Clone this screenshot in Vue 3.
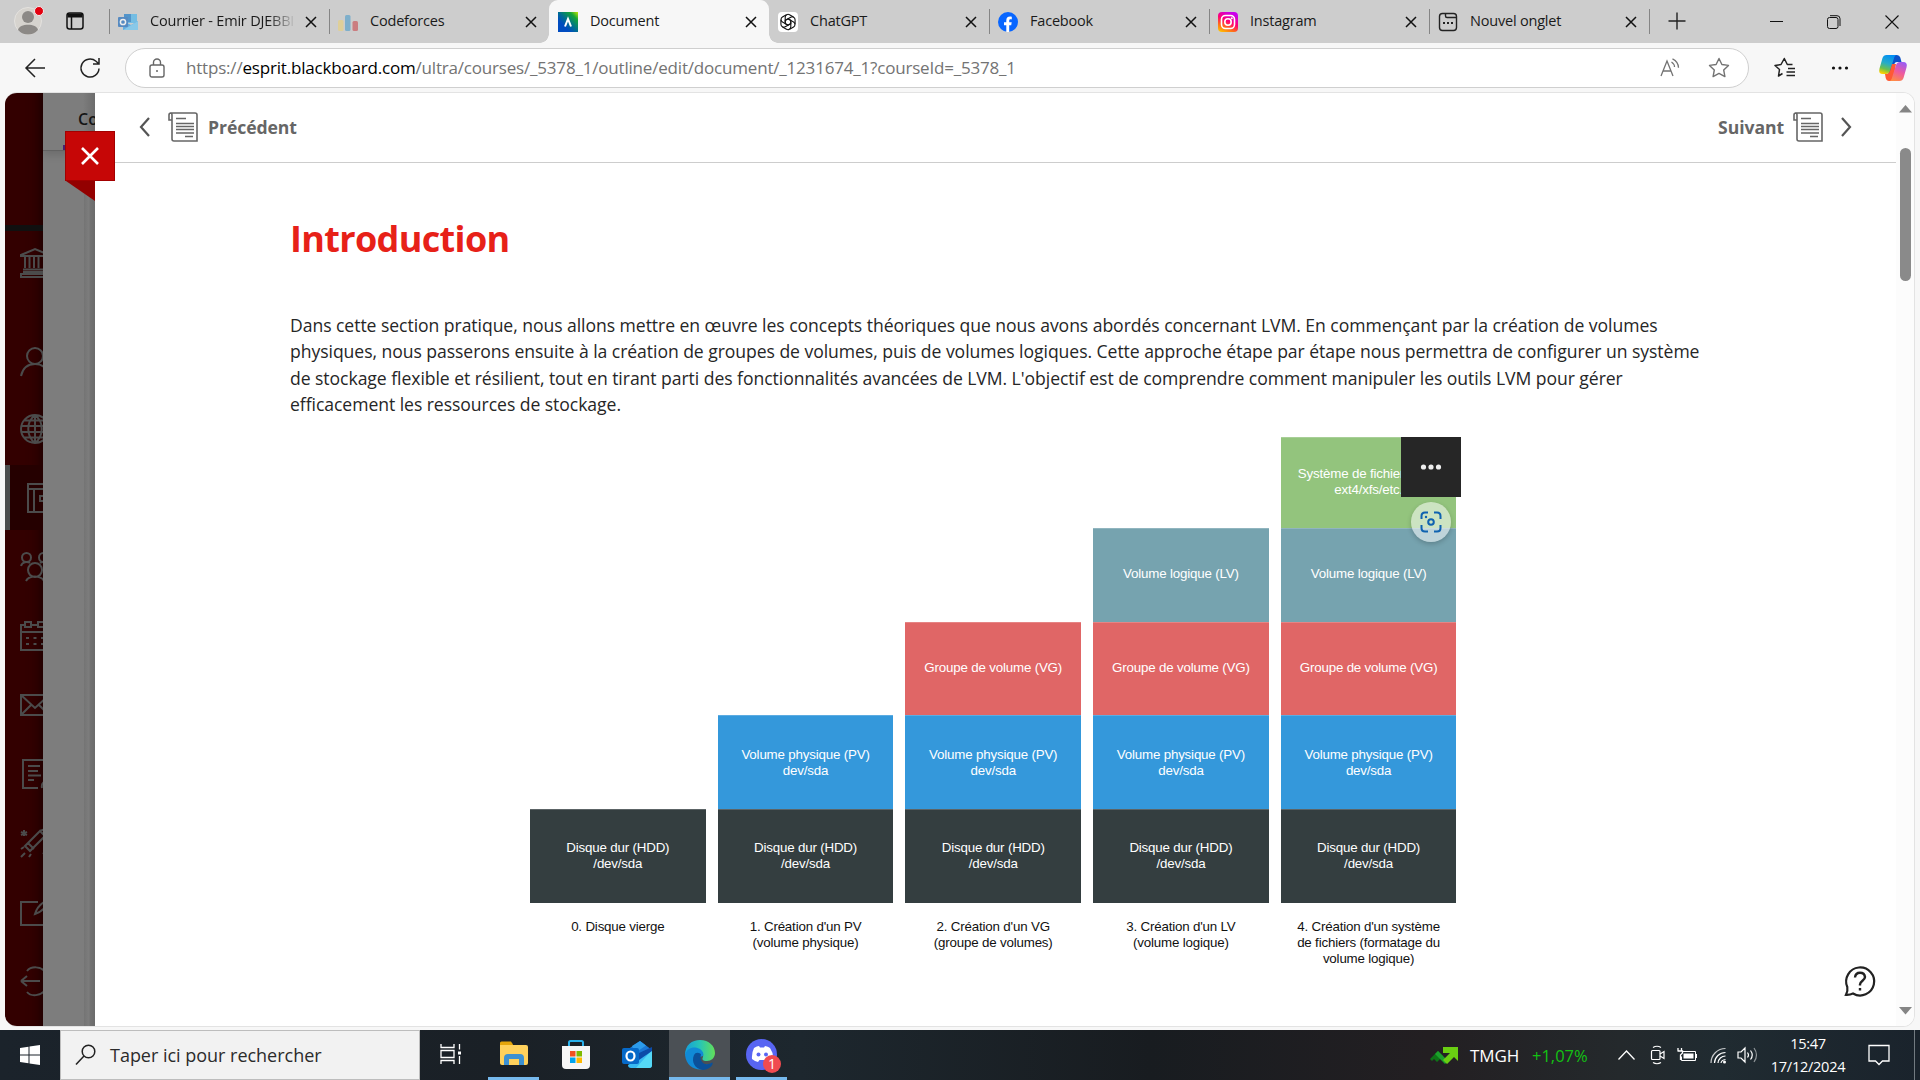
<script setup>
const tabs = [
  { icon: 'outlook', title: 'Courrier - Emir DJEBBI', fade: true },
  { icon: 'codeforces', title: 'Codeforces' },
  { icon: 'document', title: 'Document', active: true },
  { icon: 'chatgpt', title: 'ChatGPT' },
  { icon: 'facebook', title: 'Facebook' },
  { icon: 'instagram', title: 'Instagram' },
  { icon: 'blank', title: 'Nouvel onglet' },
]

const sideIcons = [
  { name: 'bank', d: 'M1 7 15 1l14 6v1H1zM5 9v11M9.500 9v11M14 9v11M18.500 9v11M25 9v11M3 21.500h24M3 24h24M1 26h28v3H1z' },
  { name: 'person', d: 'M23 9a8 8 0 1 1-16 0a8 8 0 1 1 16 0M1 29c2-9 8-12 14-12s12 3 14 12' },
  { name: 'globe', d: 'M29 15a14 14 0 1 1-28 0a14 14 0 1 1 28 0M15 1v28M1.500 12h27M1.500 18h27M4 6.500h22M4 23.500h22M15 1c-9 7-9 21 0 28M15 1c9 7 9 21 0 28' },
  { name: 'courses', active: true, d: 'M8 1h25v28H8zM8 6h25M14 6v23M33 13H20v5h13' },
  { name: 'groups', d: 'M11 5.500a4.500 4.500 0 1 1-9 0a4.500 4.500 0 1 1 9 0M28 5.500a4.500 4.500 0 1 1-9 0a4.500 4.500 0 1 1 9 0M22 18a7 7 0 1 1-14 0a7 7 0 1 1 14 0M1 14c1-4 6-5 9-3M29 14c-1-4-6-5-9-3M6 29c3-6 15-6 18 0' },
  { name: 'calendar', d: 'M5 4H1v25h28V4h-4M11 4h7M1 11h28M5 1h6v5H5zM18 1h6v5h-6zM6 17h3M13.500 17h3M21 17h3M6 23h3M13.500 23h3M21 23h3' },
  { name: 'messages', d: 'M1 5h28v20H1zM1 5l14 13L29 5M1 25l10-10M29 25 19 15' },
  { name: 'grades', d: 'M18 29H3V1h26v20M8 7h12M8 12h10M8 16.500h13M8 21h6M22 29c-1-5 2-7 7-7' },
  { name: 'tools', d: 'M5 18 20 3l5 5L10 23zM8 15l6 6M12 21 27 6M20 3l5-2M4 2v6M1 4l6 3M7 4 1 7M4 19l-3 2M5 25l-4 4M11 26l-2 3M23 26l3-3' },
  { name: 'edit', d: 'M18 5H1v23h25V16M28 3c-7 3-11 7-13 14c6-2 11-6 14-14' },
  { name: 'logout', d: 'M7 5c4-5 14-5 18 1M7 26c4 5 14 4 18-2M1 15h19M1 15l6-5M1 15l6 5' },
]

const HDD = { kind: 'hdd', lines: ['Disque dur (HDD)', '/dev/sda'] }
const PV = { kind: 'pv', lines: ['Volume physique (PV)', 'dev/sda'] }
const VG = { kind: 'vg', lines: ['Groupe de volume (VG)'] }
const LV = { kind: 'lv', lines: ['Volume logique (LV)'] }
const FS = { kind: 'fs', lines: ['Système de fichiers (FS)', 'ext4/xfs/etc.'] }
const columns = [
  { blocks: [HDD], caption: ['0. Disque vierge'] },
  { blocks: [PV, HDD], caption: ["1. Création d'un PV", '(volume physique)'] },
  { blocks: [VG, PV, HDD], caption: ["2. Création d'un VG", '(groupe de volumes)'] },
  { blocks: [LV, VG, PV, HDD], caption: ["3. Création d'un LV", '(volume logique)'] },
  { blocks: [FS, LV, VG, PV, HDD], caption: ["4. Création d'un système", 'de fichiers (formatage du', 'volume logique)'] },
]
</script>

<template>
  <div class="screen">
    <header class="tabstrip">
      <div class="profile">
        <svg width="32" height="32" viewBox="0 0 32 32"><circle cx="16" cy="16" r="13.500" fill="#d6d3ce" stroke="#e4e2df" /><circle cx="16" cy="12" r="6" fill="#8c8986" /><path d="M6 25c1-7 19-7 20 0c-5 6-15 6-20 0z" fill="#8c8986" /><circle cx="27" cy="6" r="4.500" fill="#e3000f" stroke="#eee" /></svg>
      </div>
      <div class="workspace">
        <svg width="18" height="18" viewBox="0 0 18 18" fill="none" stroke="#111" stroke-width="1.500"><rect x="1" y="1" width="16" height="16" rx="2.500" /><path d="M1.500 3.500h15" stroke-width="4" /><path d="M5.500 5v12" /></svg>
      </div>
      <div v-for="tab in tabs" :key="tab.icon" class="tab" :class="[{ active: tab.active }, tab.icon]">
        <svg class="favicon" width="20" height="20" viewBox="0 0 20 20">
          <g v-if="tab.icon === 'outlook'" opacity=".65"><path d="M6 2h13v9H6z" fill="#45b5f0" /><path d="M6 2h7v8H6z" fill="#1177c9" /><path d="M5 9l8 4 7-4v9H5z" fill="#2b9bea" /><path d="M5 18l15-9v9z" fill="#65c6f7" /><rect y="5" width="10" height="10" rx="1" fill="#1767bb" /><circle cx="5" cy="10" r="2.600" fill="none" stroke="#fff" stroke-width="1.500" /></g>
          <g v-else-if="tab.icon === 'codeforces'"><rect y="8" width="5.500" height="11" rx="1.500" fill="#dfcf98" /><rect x="7" y="3" width="5.500" height="16" rx="1.500" fill="#7eafcb" /><rect x="14.500" y="9" width="5.500" height="10" rx="1.500" fill="#cb7d80" /></g>
          <g v-else-if="tab.icon === 'document'"><defs><linearGradient id="doc" x1="1" y1="0" x2=".3" y2=".7"><stop stop-color="#c5e600" /><stop offset=".3" stop-color="#13a538" /><stop offset=".7" stop-color="#006e91" /><stop offset="1" stop-color="#004cc0" /></linearGradient></defs><path d="M0 0h20v20H0z" fill="url(#doc)" /><path d="M7 14.500 10 7l3 7.500" fill="none" stroke="#fff" stroke-width="2" /></g>
          <g v-else-if="tab.icon === 'chatgpt'"><rect width="20" height="20" rx="4" fill="#fff" /><g fill="none" stroke="#111" stroke-width="1.100"><path v-for="a in 6" :key="a" d="M7.200 8.400V5.200a2.900 2.900 0 0 1 4.300-2.500l4 2.300M7.200 8.400v3.200l2.800 1.600" :transform="`rotate(${a * 60} 10 10)`" /></g></g>
          <g v-else-if="tab.icon === 'facebook'"><circle cx="10" cy="10" r="10" fill="#0866ff" /><path d="M8.300 20v-6.700H6v-3h2.300V8.600c0-3.300 1.700-4.500 5.500-3.900v2.700c-2-.2-2.600.2-2.600 1.500v1.400h2.500l-.5 3h-2V20z" fill="#fff" /></g>
          <g v-else-if="tab.icon === 'instagram'"><defs><linearGradient id="ig" x1=".1" y1="1" x2=".6" y2="0"><stop stop-color="#ffc800" /><stop offset=".3" stop-color="#ff6b1a" /><stop offset=".6" stop-color="#ff0075" /><stop offset="1" stop-color="#c800ee" /></linearGradient></defs><rect width="20" height="20" rx="4" fill="url(#ig)" /><g fill="none" stroke="#fff" stroke-width="1.600"><rect x="3.500" y="3.500" width="13" height="13" rx="4" /><circle cx="10" cy="10" r="3.200" /></g><circle cx="13.800" cy="6.300" r="1" fill="#fff" /></g>
          <g v-else fill="none" stroke="#222" stroke-width="1.400"><rect x="1.500" y="1.500" width="17" height="17" rx="3" /><path d="M7.500 2v2q0 1.500 1.500 1.500h9" /><path d="M5 11h2M9 11h2M13 11h2" stroke-width="2" /></g>
        </svg>
        <span class="tabtitle" :class="{ fade: tab.fade }">{{ tab.title }}</span>
        <svg class="tabclose" width="12" height="12" viewBox="0 0 12 12"><path d="M1 1l10 10M11 1 1 11" stroke="#111" stroke-width="1.500" /></svg>
      </div>
      <div class="newtab"><svg width="18" height="18" viewBox="0 0 18 18"><path d="M9 .5v17M.5 9h17" stroke="#222" stroke-width="1.400" /></svg></div>
      <div class="winbtns">
        <svg width="13" height="13" viewBox="0 0 13 13"><path d="M0 6.500h13" stroke="#111" /></svg>
        <svg width="14" height="14" viewBox="0 0 14 14" fill="none" stroke="#111"><rect x=".5" y="2.500" width="10.500" height="11" rx="2" /><path d="M3 .7h7q3 0 3 3V11" /></svg>
        <svg width="14" height="14" viewBox="0 0 14 14"><path d="M.5.5l13 13M13.500.5l-13 13" stroke="#111" stroke-width="1.100" /></svg>
      </div>
    </header>

    <div class="toolbar">
      <svg class="back" width="20" height="20" viewBox="0 0 20 20" fill="none" stroke="#222" stroke-width="1.500"><path d="M20 10H1M10 1 1 10l9 9" /></svg>
      <svg class="reload" width="22" height="22" viewBox="0 0 22 22" fill="none" stroke="#222" stroke-width="1.500"><path d="M20 11.500a9 9 0 1 1-3-7.200L20 7M20 1v6h-6" /></svg>
      <div class="address">
        <svg class="lock" width="16" height="20" viewBox="0 0 16 20" fill="none" stroke="#666" stroke-width="1.400"><rect x="1" y="7" width="14" height="12" rx="2" /><path d="M4.500 7V4.500a3.500 3.500 0 0 1 7 0V7" /><circle cx="8" cy="13" r="1" fill="#666" stroke="none" /></svg>
        <span class="url">https://<b>esprit.blackboard.com</b>/ultra/courses/_5378_1/outline/edit/document/_1231674_1?courseId=_5378_1</span>
        <svg class="read" width="20" height="20" viewBox="0 0 20 20" fill="none" stroke="#737373" stroke-width="1.300"><path d="M1 18 7 3l6 15M3 13h8M11.500 4q3 2 3 5M12.500.8q6 3 6 9" /></svg>
        <svg width="22" height="22" viewBox="0 0 22 22" fill="none" stroke="#737373" stroke-width="1.400"><path d="M11 1.500l2.900 6 6.600.9-4.800 4.600 1.200 6.600-5.900-3.200-5.900 3.200L6.300 13 1.500 8.400l6.600-.9z" stroke-linejoin="round" /></svg>
      </div>
      <svg class="fav" width="22" height="22" viewBox="0 0 22 22" fill="none" stroke="#222" stroke-width="1.500"><path d="M8.500 16.500 4.500 19l1-6.500L1 8.500l6-1 3.300-6 3 6h5.200M14 11.500h7M12.500 15h8.500M12.500 18.500h8.500" stroke-linejoin="round" /></svg>
      <svg class="more" width="18" height="6" viewBox="0 0 18 6" fill="#111"><circle cx="2.500" cy="3" r="1.600" /><circle cx="9" cy="3" r="1.600" /><circle cx="15.500" cy="3" r="1.600" /></svg>
      <svg class="copilot" width="28" height="28" viewBox="0 0 28 28">
        <defs><linearGradient id="cpa" x1=".6" y1="0" x2=".3" y2="1"><stop stop-color="#008ef5" /><stop offset=".45" stop-color="#26acc8" /><stop offset=".75" stop-color="#6bc04d" /><stop offset="1" stop-color="#ffd000" /></linearGradient><linearGradient id="cpb" x1=".7" y1="0" x2=".3" y2="1"><stop stop-color="#9b5cf2" /><stop offset=".5" stop-color="#ee5aa0" /><stop offset="1" stop-color="#ff8c45" /></linearGradient></defs>
        <path d="M14 1h4q2.500 0 3.300 2.600L22.500 8H18q-2 0-2.700 2l-3 10h-3z" fill="#0b51c9" />
        <path d="M7.500 1H18q-2 0-2.700 2.200L11 17q-1 3-4 3H4q-5 0-3.500-5.500L3.500 4q1-3 4-3z" fill="url(#cpa)" />
        <path d="M14 27h-4q-2.500 0-3.300-3L6 20h2q2 0 3-3l2-7h4z" fill="#ff5935" />
        <path d="M20.500 27H10q2 0 2.700-2.200L17 11q1-3 4-3h3q5 0 3.500 5.500l-3 10.500q-1 3-4 3z" fill="url(#cpb)" />
      </svg>
    </div>

    <main class="viewport">
      <nav class="sidebar">
        <div class="logo"></div>
        <div v-for="item in sideIcons" :key="item.name" class="sideitem" :class="[item.name, { current: item.active }]">
          <svg width="36" height="30" viewBox="0 0 36 30" fill="none" stroke="#4b4b4b" stroke-width="2"><path :d="item.d" /></svg>
        </div>
      </nav>
      <div class="under">
        <div class="underhead">Co</div>
        <div class="marker"></div>
      </div>

      <section class="panel">
        <div class="close"><svg width="18" height="18" viewBox="0 0 18 18"><path d="M1 1l16 16M17 1 1 17" stroke="#fff" stroke-width="2.600" /></svg></div>
        <div class="fold"></div>
        <div class="pager">
          <div class="page">
            <svg width="11" height="20" viewBox="0 0 11 20" fill="none" stroke="#555" stroke-width="2.200"><path d="M10 1 2 10l8 9" /></svg>
            <svg class="docicon" width="30" height="30" viewBox="0 0 30 30" fill="none" stroke="#666" stroke-width="1.600"><path d="M4 8v19q0 2 2 2h23V3q0-2-2-2H3Q1 1 1 3v5h3V3q0-2-1.500-2M8 6.500h10M8 11.500h18M8 14.500h18M8 17.500h18M8 21h18M17 24.500h8" /></svg>
            <span>Précédent</span>
          </div>
          <div class="page">
            <span>Suivant</span>
            <svg class="docicon" width="30" height="30" viewBox="0 0 30 30" fill="none" stroke="#666" stroke-width="1.600"><path d="M4 8v19q0 2 2 2h23V3q0-2-2-2H3Q1 1 1 3v5h3V3q0-2-1.500-2M8 6.500h10M8 11.500h18M8 14.500h18M8 17.500h18M8 21h18M17 24.500h8" /></svg>
            <svg width="11" height="20" viewBox="0 0 11 20" fill="none" stroke="#555" stroke-width="2.200"><path d="M1 1l8 9-8 9" /></svg>
          </div>
        </div>
        <article>
          <h1>Introduction</h1>
          <p>
            Dans cette section pratique, nous allons mettre en œuvre les concepts théoriques que nous avons abordés concernant LVM. En commençant par la création de volumes<br />
            physiques, nous passerons ensuite à la création de groupes de volumes, puis de volumes logiques. Cette approche étape par étape nous permettra de configurer un système<br />
            de stockage flexible et résilient, tout en tirant parti des fonctionnalités avancées de LVM. L'objectif est de comprendre comment manipuler les outils LVM pour gérer<br />
            efficacement les ressources de stockage.
          </p>
          <figure>
            <div v-for="(col, i) in columns" :key="i" class="column">
              <div v-for="block in col.blocks" :key="block.kind" class="block" :class="block.kind">
                <span v-for="line in block.lines" :key="line">{{ line }}</span>
              </div>
              <div class="caption"><span v-for="line in col.caption" :key="line">{{ line }}</span></div>
            </div>
            <div class="imgmenu"><svg width="22" height="6" viewBox="0 0 22 6" fill="#eee"><circle cx="3.500" cy="3" r="2.600" /><circle cx="11" cy="3" r="2.600" /><circle cx="18.500" cy="3" r="2.600" /></svg></div>
            <div class="lens"><svg width="22" height="22" viewBox="0 0 22 22" fill="none" stroke="#0f62b0" stroke-width="2"><path d="M8 1.500H5Q1.500 1.500 1.500 5v3M14 1.500h3q3.500 0 3.500 3.500v3M8 20.500H5Q1.500 20.500 1.500 17v-3M14 20.500h3q3.500 0 3.500-3.500v-3" /><circle cx="11" cy="11" r="2.800" /><circle cx="6" cy="6" r="1.200" fill="#0f62b0" stroke="none" /></svg></div>
          </figure>
        </article>
        <svg class="help" width="32" height="32" viewBox="0 0 32 32" fill="none" stroke="#222" stroke-width="2.200"><path d="M3.300 22A14 14 0 1 1 9 28.500Q6 30 2 29.800Q4 26 3.300 22z" /><path d="M11 12.500q.5-4.800 5-4.800t5 4.300c0 3.500-5 4-5 7.500v1" stroke-width="2.400" /><path d="M16 23v2.500" stroke-width="2.400" /></svg>
      </section>

      <aside class="scrollbar">
        <svg width="13" height="8" viewBox="0 0 13 8" fill="#858585"><path d="M0 7.500 6.500 0 13 7.500z" /></svg>
        <div class="thumb"></div>
        <svg width="13" height="8" viewBox="0 0 13 8" fill="#858585"><path d="M0 0h13L6.500 7.500z" /></svg>
      </aside>
    </main>

    <footer class="taskbar">
      <div class="start"><svg width="20" height="20" viewBox="0 0 20 20" fill="#fff"><path d="M0 3l8.500-1.200v7.700H0zM9.500 1.600 20 0v9.500H9.500zM0 10.500h8.500v7.700L0 17zM9.500 10.500H20V20L9.500 18.400z" /></svg></div>
      <div class="search">
        <svg width="22" height="22" viewBox="0 0 22 22" fill="none" stroke="#222" stroke-width="1.500"><circle cx="13.500" cy="7.500" r="6.300" /><path d="M9 12 1 20.500" /></svg>
        <span>Taper ici pour rechercher</span>
      </div>
      <div class="app view"><svg width="22" height="22" viewBox="0 0 22 22" fill="none" stroke="#fff" stroke-width="1.300"><path d="M1 0v3.500h13V0M1 20v-3.500h13V20M1 6.500h13v7H1zM19.500 0v5.500M19.500 12v8" /><path d="M18 7.500h3v3h-3z" fill="#fff" stroke="none" /></svg></div>
      <div class="app open"><svg width="30" height="28" viewBox="0 0 30 28"><path d="M1 5V2q0-1.500 1.500-1.500H12l2 3V8H1z" fill="#e5a50a" /><path d="M1 4h26q2 0 2 2v16q0 2-2 2H3q-2 0-2-2z" fill="#ffd15c" /><path d="M5 24v-7q0-4 4-4h12q4 0 4 4v7h-5v-6H10v6z" fill="#3d91d2" /></svg></div>
      <div class="app"><svg width="30" height="30" viewBox="0 0 30 30"><path d="M8 7V2.500Q8 1 9.500 1h11Q22 1 22 2.500V7" fill="none" stroke="#29b1ec" stroke-width="2" /><path d="M1 6h28v19q0 4-4 4H5q-4 0-4-4z" fill="#f6f6f6" /><path d="M9 11h5.500v5.500H9z" fill="#f25022" /><path d="M15.500 11H21v5.500h-5.500z" fill="#7fba00" /><path d="M9 17.500h5.500V23H9z" fill="#00a4ef" /><path d="M15.500 17.500H21V23h-5.500z" fill="#ffb900" /></svg></div>
      <div class="app"><svg width="32" height="28" viewBox="0 0 32 28"><path d="M5 9 18 0l12 9v12H5z" fill="#1b77d4" /><path d="M10 5 18 0l6 4.500L13 12z" fill="#2c9bea" /><path d="M30 9v15q0 3-3 3H9q-3 0-3-3z" fill="#37b9f2" /><path d="M30 9v15q0 3-3 3H14z" fill="#55d8f6" /><path d="M17 12l13-6v4l-13 9z" fill="#0c4ba8" /><rect y="7" width="17" height="16" rx="2" fill="#0669c8" /><ellipse cx="8.500" cy="15" rx="4" ry="4.500" fill="none" stroke="#fff" stroke-width="2.200" /></svg></div>
      <div class="app open selected"><svg width="30" height="30" viewBox="0 0 30 30"><defs><linearGradient id="ed" x1="0" y1=".4" x2="1" y2=".4"><stop stop-color="#149edc" /><stop offset=".5" stop-color="#28c5b5" /><stop offset="1" stop-color="#63df58" /></linearGradient></defs><path d="M0 15C0 5 7 0 15 0c9 0 15 6 15 13 0 5-4 8-8 8-5 0-5-2-4-4C20 9 8 6 0 15z" fill="url(#ed)" /><path d="M0 15C2 7 10 6 15 9c3 2 4 5 3 7l-3 1c-2 6 6 10 12 6C21 33 2 32 0 15z" fill="#118ad6" /><path d="M9 15c-3 7 1 14 9 15C27 29 29 22 27 22.500 20 27 14 22 16 14q-5-3-7 1z" fill="#0b5099" /></svg></div>
      <div class="app open discord"><svg width="32" height="32" viewBox="0 0 32 32"><circle cx="15.500" cy="15.500" r="15.500" fill="#5865f2" /><path d="M8 9q3-2 5-2l1 1.500h4L19 7q3 .5 5 2 3.500 5 3 11-3 3-6 3l-1.500-2h-6L12 23q-3-.5-6-3-.5-6 2-11z" fill="#fff" /><circle cx="12.500" cy="15.500" r="2" fill="#5865f2" /><circle cx="20" cy="15.500" r="2" fill="#5865f2" /></svg><i>1</i></div>
      <div class="spacer"></div>
      <svg class="stock" width="28" height="17" viewBox="0 0 28 17"><path d="M0 12 8 4l5 5-6 6-3-3-2 2z" fill="#0e7417" /><path d="M8 4l10 10-3 3L5 7z" fill="#1ba12b" /><path d="M13 0h15v14l-4-4-7 7-4-4 7-7h-7z" fill="#6ace12" /></svg>
      <span class="ticker">TMGH</span>
      <span class="change">+1,07%</span>
      <svg class="chev" width="17" height="10" viewBox="0 0 17 10" fill="none" stroke="#fff" stroke-width="1.300"><path d="M.5 9.500l8-8.500 8 8.500" /></svg>
      <svg class="cam" width="16" height="20" viewBox="0 0 16 20" fill="none" stroke="#fff" stroke-width="1.200"><rect x="1.500" y="5.500" width="8.500" height="9" rx="1" /><path d="M10 9l4-2.500v7L10 11M3 2.500q4-2.500 8 0M3 17.500q4 2.500 8 0" /></svg>
      <svg class="bat" width="20" height="16" viewBox="0 0 20 16"><path d="M5 4.500h13.500v9h-14v-4" fill="none" stroke="#fff" /><path d="M6.500 6.500h10v5h-10zM18.500 7H20v4h-1.500z" fill="#fff" /><path d="M1 1v3M4.500 1v3M.5 4h5v2l-2 2v5" fill="none" stroke="#fff" stroke-width="1.300" /></svg>
      <svg class="wifi" width="17" height="17" viewBox="0 0 17 17" fill="none" stroke="#fff" stroke-width="1.200"><path d="M1 16A14.500 14.500 0 0 1 15.500 1.500" opacity=".75" /><path d="M4.500 16A11 11 0 0 1 15.500 5.500M8 16a7.500 7.500 0 0 1 7.500-7M11 16q.5-3 4.500-3.500" /><circle cx="14.500" cy="15" r="1.500" fill="#fff" stroke="none" /></svg>
      <svg class="vol" width="21" height="16" viewBox="0 0 21 16" fill="none" stroke="#fff" stroke-width="1.200"><path d="M1 5h3l4-4v14l-4-4H1zM10.500 5.500q2 2.500 0 5M13.500 3.500q3.500 4.500 0 9" /><path d="M17 1q5 7 0 14" opacity=".5" /></svg>
      <div class="clock"><span>15:47</span><span>17/12/2024</span></div>
      <svg class="notif" width="22" height="22" viewBox="0 0 22 22" fill="none" stroke="#fff" stroke-width="1.300"><path d="M1 1.500h20v15.500h-6.500L11 20.500 7.500 17H1z" /></svg>
      <div class="peek"></div>
    </footer>
  </div>
</template>

<style>
body { margin: 0; overflow: hidden; }
</style>

<style scoped>
* { box-sizing: border-box; }
svg { display: block; flex: none; overflow: visible; }
.screen { width: 1920px; height: 1080px; display: flex; flex-direction: column; background: #f7f7f7; font-family: "Open Sans", "Noto Sans", sans-serif; overflow: hidden; }

.tabstrip { height: 43px; flex: none; display: flex; background: #cdcdcd; }
.profile { width: 66px; padding: 5px 0 0 12px; }
.workspace { width: 43px; padding-top: 12px; }
.tab { width: 220px; height: 43px; display: flex; align-items: center; padding: 0 12px 0 9px; background-image: linear-gradient(#858585, #858585); background-size: 1px 25px; background-position: 0 9px; background-repeat: no-repeat; }
.tab.active { background: #f7f7f7; border-radius: 9px 9px 0 0; position: relative; }
.tab.active::before, .tab.active::after { content: ""; position: absolute; bottom: 0; width: 9px; height: 9px; }
.tab.active::before { left: -9px; background: radial-gradient(circle at 0 0, transparent 8.500px, #f7f7f7 9px); }
.tab.active::after { right: -9px; background: radial-gradient(circle at 100% 0, transparent 8.500px, #f7f7f7 9px); }
.tab.chatgpt { background: none; }
.favicon { margin-top: 1px; }
.tabtitle { width: 145px; margin: -2px 0 0 12px; white-space: nowrap; overflow: hidden; font-size: 14.500px; line-height: 22px; letter-spacing: -0.2px; color: #1a1a1a; }
.tabtitle.fade { mask-image: linear-gradient(90deg, #000 118px, transparent 146px); }
.tabclose { margin: 1px 0 0 auto; }
.newtab { padding: 12px 0 0 19px; background: linear-gradient(#858585, #858585) 0 9px / 1px 25px no-repeat; }
.winbtns { display: flex; align-items: center; gap: 44px; margin-left: auto; padding-right: 21px; }

.toolbar { height: 49px; flex: none; display: flex; align-items: center; padding: 1px 13px 0 25px; }
.reload { margin: 0 24px 0 34px; }
.address { width: 1624px; height: 40px; display: flex; align-items: center; padding: 0 18px 0 23px; border: 1px solid #cfcfcf; border-radius: 20px; background: #fff; }
.url { margin: -1px auto 0 21px; font-size: 17px; letter-spacing: -0.19px; color: #737373; white-space: nowrap; }
.url b { font-weight: 400; color: #000; }
.read { margin-right: 28px; }
.fav { margin-left: 25px; }
.more { margin-left: 35px; }
.copilot { margin-left: auto; }

.viewport { margin: 0 5px; height: 935px; flex: none; display: flex; border: 1px solid #e3e3e3; border-left: 0; border-radius: 12px; background: #fff; overflow: hidden; }
.sidebar { width: 38px; background: #330000; overflow: hidden; box-shadow: inset -12px 0 14px -10px #1a0000; flex: none; }
.logo { height: 138px; border-bottom: 6px solid #101010; }
.sideitem { height: 69px; display: flex; align-items: center; padding-left: 15px; }
.sideitem.bank { height: 64px; }
.sideitem.person { height: 67px; margin-top: 33px; }
.sideitem.globe { height: 68px; }
.sideitem.current { height: 65px; margin: 2px 0; padding-left: 10px; border-left: 5px solid #4a4d4d; background: #250000; }
.under { position: relative; width: 52px; flex: none; background: linear-gradient(90deg, transparent 41px, #747474 41px, #7d7d7d 46px, #737373 47px, #6b6b6b) #7d7d7d; }
.underhead { height: 58px; padding: 12px 0 0 35px; border-bottom: 1px solid #626262; background: linear-gradient(90deg, #7d7d7d 40px, #6c6c6c); box-shadow: 0 4px 8px #0002; color: #151515; font-size: 16px; font-weight: 600; line-height: 28px; }
.marker { position: absolute; left: 20px; top: 52px; width: 32px; height: 5px; background: #4a2070; }

.panel { position: relative; width: 1801px; flex: none; background: #fff; }
.close { position: absolute; left: -30px; top: 38px; width: 50px; height: 50px; display: flex; align-items: center; justify-content: center; background: #c60606; border: 1px solid #a30000; }
.fold { position: absolute; left: -29px; top: 88px; width: 29px; height: 20px; background: #930000; clip-path: polygon(0 0, 100% 0, 100% 100%); }
.pager { height: 70px; display: flex; justify-content: space-between; padding: 0 44px 1px 44px; border-bottom: 1px solid #cdcdcd; }
.page { display: flex; align-items: center; color: #666; font-size: 17.600px; font-weight: 700; letter-spacing: -0.08px; }
.page:first-child .docicon { margin: 0 10px 0 18px; }
.page:last-child .docicon { margin: 0 18px 0 9px; }
article { padding-left: 195px; }
h1 { margin: 51px 0 0; font-size: 36px; line-height: 50px; font-weight: 700; letter-spacing: -0.65px; color: #e72118; }
p { margin: 48px 0 0; font-size: 17.600px; line-height: 26.400px; letter-spacing: -0.06px; color: #262626; white-space: nowrap; }
p::first-line { letter-spacing: -0.06px; }
figure { position: relative; width: 927px; height: 543px; margin: 19px 0 0 240px; display: flex; align-items: flex-end; gap: 12px; font-family: "Liberation Sans", Arial, sans-serif; font-size: 13.333px; line-height: 16px; letter-spacing: -0.18px; text-align: center; }
.column { width: 175.700px; flex: none; }
.block { height: 93.700px; display: flex; flex-direction: column; justify-content: center; color: #fff; border-top: 1px solid #fff3; white-space: nowrap; }
.block.fs { height: 91px; padding-bottom: 2px; }
.block.vg, .block.lv { padding-bottom: 2px; }
.block.hdd { background: #343e40; }
.block.pv { background: #3498db; }
.block.vg { background: #e06666; }
.block.lv { background: #76a3af; }
.block.fs { background: #93c47d; }
.caption { height: 77px; display: flex; flex-direction: column; padding-top: 16px; color: #111; }
.imgmenu { position: absolute; left: 871px; top: 0; width: 60px; height: 60px; display: flex; align-items: center; justify-content: center; background: #262626; }
.lens { position: absolute; left: 881px; top: 65px; width: 40px; height: 40px; display: flex; align-items: center; justify-content: center; border-radius: 50%; background: #fff8; box-shadow: 0 2px 5px #0003; }
.help { position: absolute; left: 1749px; top: 872px; }

.scrollbar { flex: 1; display: flex; flex-direction: column; align-items: center; padding: 12px 0 11px; background: #fcfcfc; }
.thumb { width: 11px; height: 133px; margin: 35px 0 auto; border-radius: 6px; background: #8a8a8a; }

.taskbar { height: 50px; margin-top: 3px; flex: none; display: flex; align-items: center; color: #fff; background: linear-gradient(90deg, #1b232b 0, #1a2026 500px, #1d272e 800px, #181c20 1150px, #231f22 1430px, #24292c 1620px, #202b31 1720px, #1a232c); }
.start { width: 60px; padding-left: 20px; }
.search { width: 360px; height: 50px; display: flex; align-items: center; padding-left: 14px; background: #f2f2f2; border: 1px solid #bdbdbd; color: #2b2b2b; }
.search span { margin: -1px 0 0 13px; font-size: 18px; letter-spacing: -0.02px; white-space: nowrap; }
.app { position: relative; width: 51px; height: 50px; margin-right: 11px; display: flex; align-items: center; justify-content: center; }
.app.view { width: 61px; margin-right: 7px; }
.app.open { border-bottom: 3px solid #76b9ed; padding-top: 3px; }
.app.selected { width: 61px; margin: 0 6px 0 -5px; background: #4b5055; }
.app.discord { margin: 0; }
.discord i { position: absolute; right: 6px; bottom: 4px; width: 18px; height: 18px; border-radius: 9px; background: #f04b50; font: 14px/18px "Open Sans", sans-serif; text-align: center; }
.spacer { flex: 1; }
.stock { margin-right: 12px; }
.ticker { width: 62px; font-size: 17px; letter-spacing: -0.1px; }
.change { width: 86px; font-size: 16.500px; color: #13c113; white-space: nowrap; }
.chev { margin-right: 15px; }
.cam { margin-right: 11px; }
.bat { margin-right: 13px; }
.wifi { margin-right: 10px; }
.clock { width: 90px; margin: 0 15px 0 5px; display: flex; flex-direction: column; align-items: center; font-size: 14.600px; line-height: 23px; white-space: nowrap; letter-spacing: -0.3px; }
.notif { margin-right: 24px; }
.peek { width: 6px; height: 50px; border-left: 1px solid #727a80; }
</style>
